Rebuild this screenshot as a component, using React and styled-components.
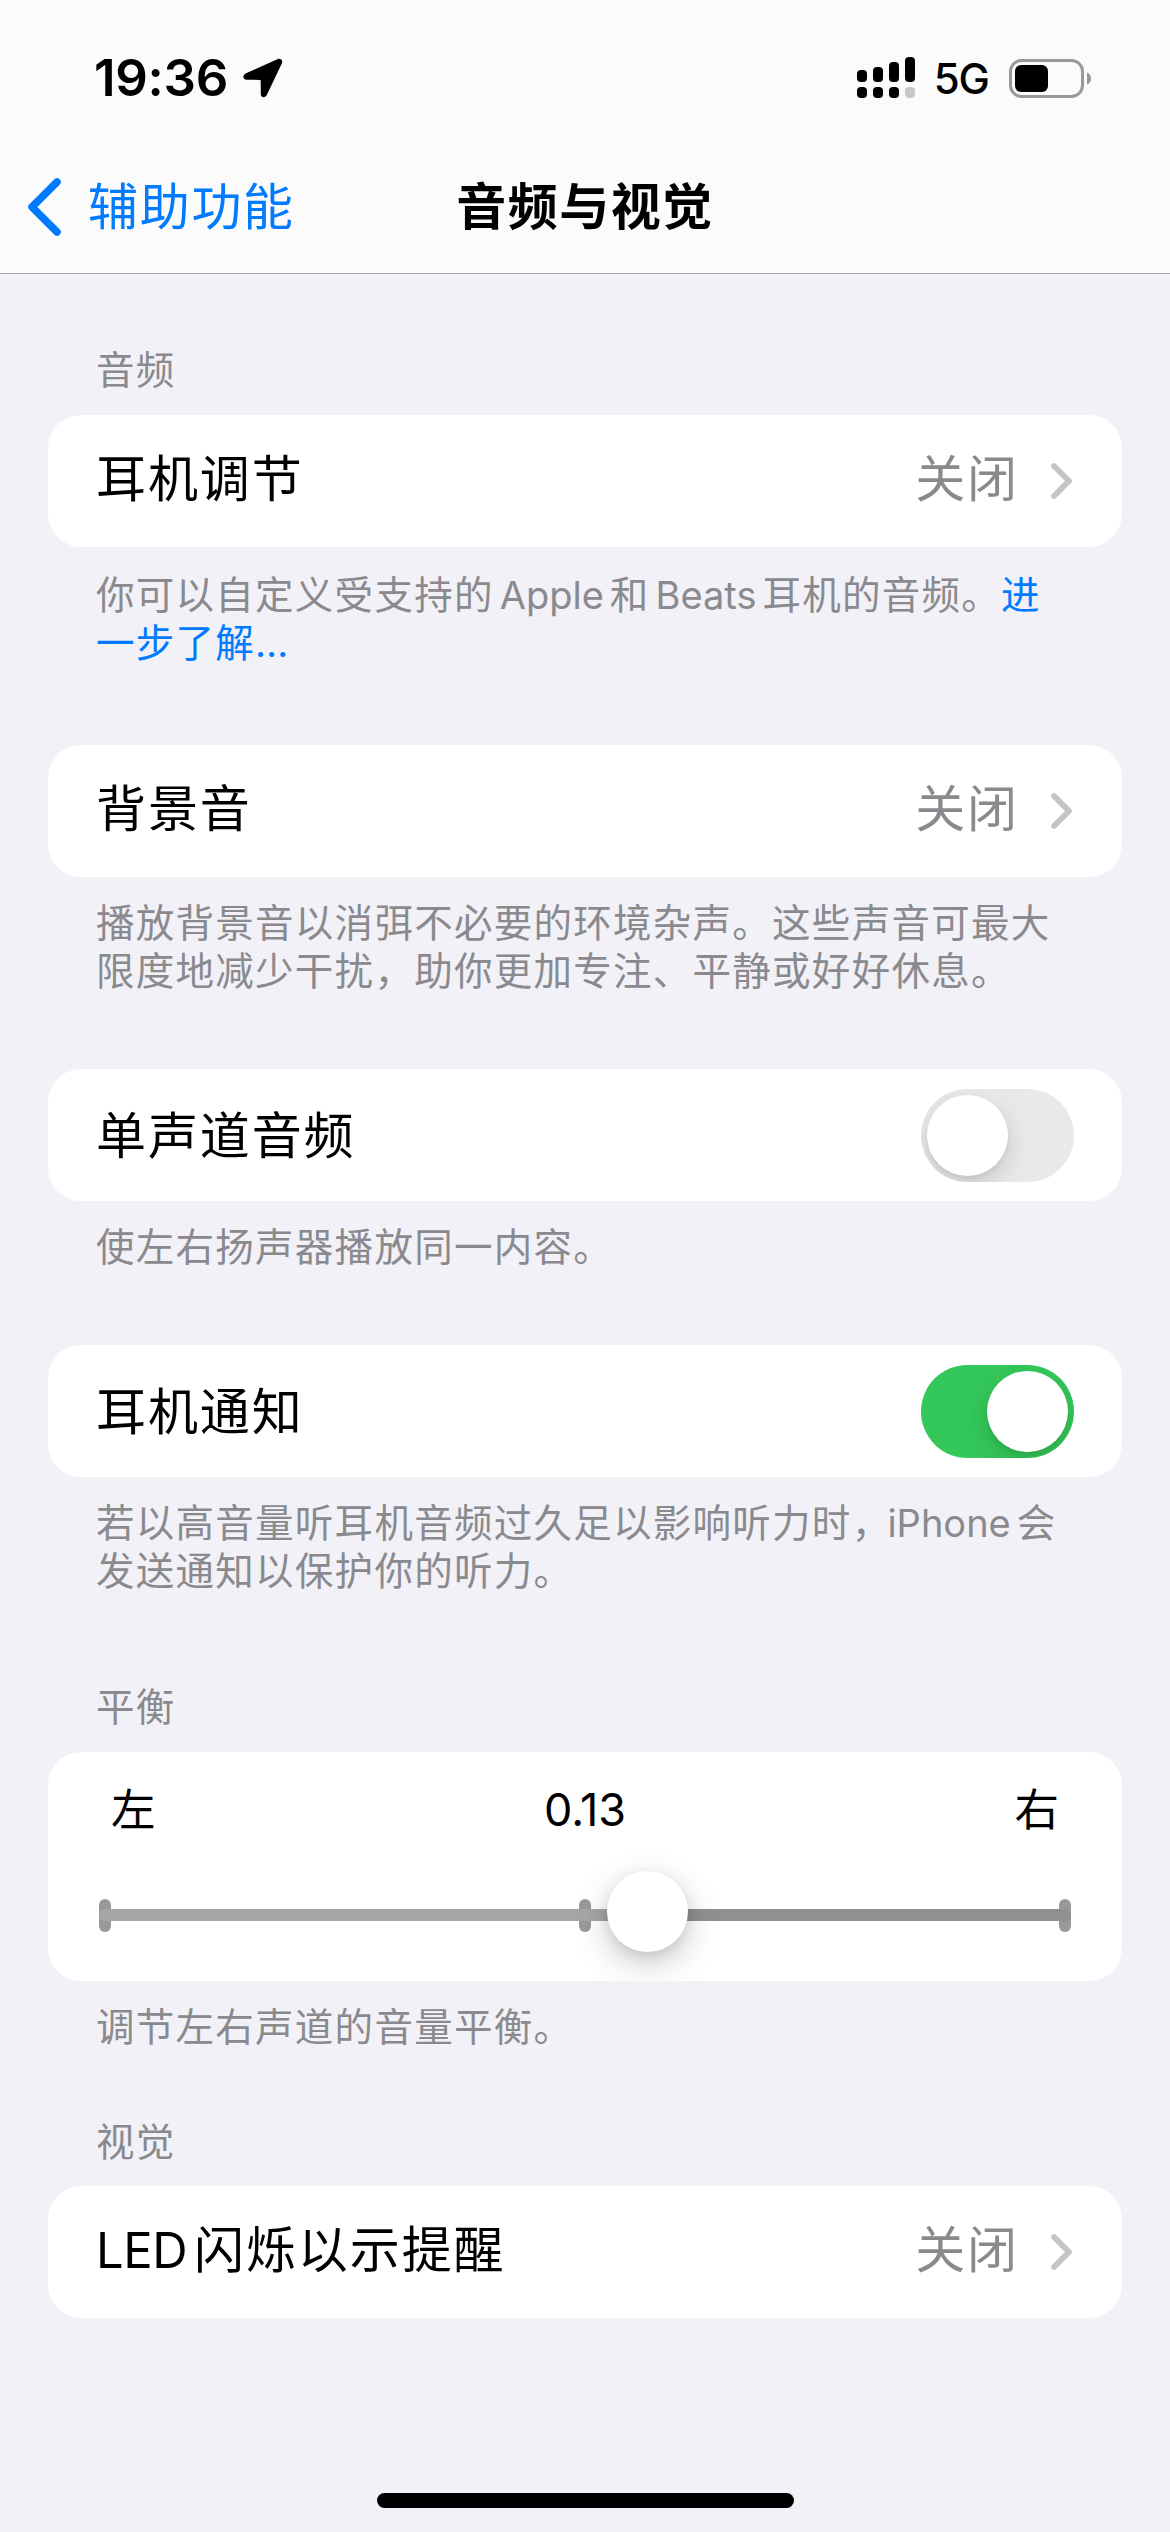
import React, { useState } from 'react'
import styled, { createGlobalStyle } from 'styled-components'

const colors = {
  BLACK: '#000000',
  WHITE: '#ffffff',
  BLUE: '#007aff',
  GREEN: '#34c759',
  GREY: '#8a8a8e',
  PAGE: '#f2f1f7',
  BAR: '#fbfbfc',
  LINE: '#a7a7ab',
}

const GlobalStyle = createGlobalStyle`
  * {
    box-sizing: border-box;
  }
  body {
    margin: 0;
    background: ${colors.PAGE};
    font-family: Inter, 'Noto Sans CJK SC', sans-serif;
  }
`

const Screen = styled.div`
  display: flex;
  flex-direction: column;
  width: 1170px;
  height: 2532px;
  overflow: hidden;
  background: ${colors.PAGE};
`

const Header = styled.header`
  height: 274px;
  background: ${colors.BAR};
  border-bottom: 1px solid ${colors.LINE};
`

const StatusBar = styled.div`
  display: flex;
  align-items: center;
  justify-content: space-between;
  height: 156px;
  padding: 0 79px 0 94px;
`

const StatusGroup = styled.div`
  display: flex;
  align-items: center;
`

const Clock = styled.span`
  margin-right: 15px;
  font-size: 51px;
  font-weight: 600;
  line-height: 60px;
  letter-spacing: -0.3px;
`

const Network = styled.span`
  margin: 2px 20px 0 19px;
  font-size: 42px;
  font-weight: 500;
  line-height: 52px;
  letter-spacing: -1px;
`

const NavBar = styled.nav`
  display: grid;
  grid-template-columns: 1fr auto 1fr;
  align-items: center;
  height: 101px;
  padding: 0 28px;
`

const BackLink = styled.a`
  display: flex;
  align-items: center;
  gap: 26px;
  color: ${colors.BLUE};
  font-size: 50px;
  line-height: 60px;
  letter-spacing: 1.7px;
`

const Title = styled.h1`
  margin: 0;
  font-size: 50px;
  font-weight: 600;
  line-height: 60px;
  letter-spacing: 1.5px;
`

const Section = styled.section`
  margin: ${props => props.$top}px 48px 0;
`

const Heading = styled.h2`
  margin: 0;
  padding: 0 48px ${props => props.$gap || 21}px;
  color: ${colors.GREY};
  font-size: 38.5px;
  font-weight: 400;
  line-height: 48px;
  letter-spacing: 1.2px;
`

const Card = styled.div`
  overflow: hidden;
  border-radius: 33px;
  background: ${colors.WHITE};
`

const Row = styled.div`
  display: flex;
  align-items: center;
  justify-content: space-between;
  height: 132px;
  padding: 0 48px;
`

const Label = styled.span`
  margin-top: ${props => props.$shift || -4}px;
  font-size: 50px;
  line-height: 60px;
  letter-spacing: 1.9px;
`

const Value = styled.span`
  display: flex;
  align-items: center;
  gap: 31px;
  color: ${colors.GREY};
`

const Note = styled.p`
  margin: 0;
  padding: ${props => props.$gap || 22}px 0 0 48px;
  color: ${colors.GREY};
  font-size: 38.5px;
  line-height: 48px;
  letter-spacing: 1.27px;
  white-space: nowrap;
`

const Latin = styled.span`
  margin: ${props => props.$space || '0 6px'};
  font-size: ${props => props.$size || 38}px;
  letter-spacing: ${props => props.$track || 0}px;
`

const Link = styled.a`
  color: ${colors.BLUE};
`

const Track = styled.button`
  display: flex;
  justify-content: ${props => (props.$on ? 'flex-end' : 'flex-start')};
  width: 153px;
  height: 93px;
  margin-top: 1px;
  padding: 6px;
  overflow: hidden;
  border: 0;
  border-radius: 47px;
  background: ${props => (props.$on ? colors.GREEN : '#e9e9e9')};
`

const Knob = styled.span`
  width: 81px;
  height: 81px;
  border-radius: 50%;
  background: ${colors.WHITE};
  box-shadow: 0 9px 24px rgba(0, 0, 0, 0.15), 0 3px 4px rgba(0, 0, 0, 0.05);
`

const BalanceCard = styled(Card)`
  height: 229px;
  padding: 31px 51px 0;
`

const BalanceLabels = styled.div`
  display: grid;
  grid-template-columns: 1fr auto 1fr;
  padding: 0 12px;
  font-size: 44.5px;
  line-height: 54px;

  span:last-child {
    text-align: right;
  }
`

const BalanceValue = styled.span`
  font-size: 45px;
  letter-spacing: -0.1px;
`

const Slider = styled.div`
  position: relative;
  display: flex;
  align-items: center;
  justify-content: space-between;
  height: 33px;
  margin-top: 62px;
`

const Tick = styled.span`
  width: 12px;
  height: 33px;
  border-radius: 6px;
  background: #999999;
`

const Rail = styled.div`
  position: absolute;
  top: 10px;
  left: 0;
  right: 0;
  height: 12px;
  border-radius: 6px;
  overflow: hidden;
  background: #909092;
`

const RailFill = styled.div`
  height: 12px;
  background: #a6a6a6;
`

const Thumb = styled.span`
  position: absolute;
  top: -28px;
  width: 81px;
  height: 81px;
  border-radius: 50%;
  background: ${colors.WHITE};
  box-shadow: 0 12px 36px rgba(0, 0, 0, 0.2), 0 4px 14px rgba(0, 0, 0, 0.1);
`

const HomeIndicator = styled.div`
  width: 417px;
  height: 15px;
  margin: auto auto 24px;
  border-radius: 8px;
  background: ${colors.BLACK};
`

const LocationIcon = () => (
  <svg width="40" height="40" viewBox="0 0 40 40">
    <path
      d="M34.3 1.2 L2.6 15.5 C-0.9 17.3 0 21.7 3.4 21.8 L17 21.9 Q17.7 21.9 17.7 22.6 L17.8 36.2 C17.9 39.7 22.3 40.2 23.8 37 L38.8 5.4 C40.2 2.3 37.5 -0.2 34.3 1.2 Z"
      fill={colors.BLACK}
    />
  </svg>
)

// Two rows of bars, one for each SIM
const SignalIcon = () => (
  <svg width="58" height="42" viewBox="0 0 58 42">
    {[13, 10, 5, 0].map((top, i) => (
      <rect key={top} x={i * 16} y={top} width="10" height={25 - top} rx="4" />
    ))}
    {[0, 16, 32, 48].map(x => (
      <rect key={x} x={x} y="30" width="10" height="11" rx="4" fill={x === 48 ? '#c8c8c9' : colors.BLACK} />
    ))}
  </svg>
)

const BatteryIcon = () => (
  <svg width="82" height="39" viewBox="0 0 82 39">
    <rect x="1.5" y="1.5" width="72" height="36" rx="11" fill="none" stroke="#999999" strokeWidth="3" />
    <rect x="6" y="6" width="33" height="27" rx="6" />
    <path d="M78 13.5 Q82 15 82 19.5 Q82 24 78 25.5 Z" fill="#999999" />
  </svg>
)

const BackIcon = () => (
  <svg width="34" height="58" viewBox="0 0 34 58">
    <path d="M29 4 L4 29 L29 54" fill="none" stroke={colors.BLUE} strokeWidth="7.5" strokeLinecap="round" strokeLinejoin="round" />
  </svg>
)

const ChevronIcon = () => (
  <svg width="24" height="38" viewBox="0 0 24 38">
    <path d="M4 4 L19 19 L4 34" fill="none" stroke="#c4c4c6" strokeWidth="5.8" strokeLinecap="round" strokeLinejoin="round" />
  </svg>
)

const LinkRow = ({ label, value }) => (
  <Card>
    <Row>
      <Label>{ label }</Label>
      <Value>
        <Label>{ value }</Label>
        <ChevronIcon />
      </Value>
    </Row>
  </Card>
)

const SwitchRow = ({ label, initial }) => {
  const [on, setOn] = useState(initial)
  return (
    <Card>
      <Row>
        <Label $shift={2}>{ label }</Label>
        <Track $on={on} role="switch" aria-checked={on} onClick={() => setOn(!on)}>
          <Knob />
        </Track>
      </Row>
    </Card>
  )
}

const BalanceSlider = ({ value }) => {
  // the thumb stays inside the rail at both ends
  const left = ((value + 1) / 2) * (972 - 81) + 5
  return (
    <BalanceCard>
      <BalanceLabels>
        <span>左</span>
        <BalanceValue>{ value.toFixed(2) }</BalanceValue>
        <span>右</span>
      </BalanceLabels>
      <Slider>
        <Tick />
        <Tick />
        <Tick />
        <Rail>
          <RailFill style={{ width: left + 40 }} />
        </Rail>
        <Thumb style={{ left }} />
      </Slider>
    </BalanceCard>
  )
}

const App = () => (
  <Screen>
    <GlobalStyle />
    <Header>
      <StatusBar>
        <StatusGroup>
          <Clock>19:36</Clock>
          <LocationIcon />
        </StatusGroup>
        <StatusGroup>
          <SignalIcon />
          <Network>5G</Network>
          <BatteryIcon />
        </StatusGroup>
      </StatusBar>
      <NavBar>
        <BackLink>
          <BackIcon />
          辅助功能
        </BackLink>
        <Title>音频与视觉</Title>
      </NavBar>
    </Header>

    <Section $top={72}>
      <Heading>音频</Heading>
      <LinkRow label="耳机调节" value="关闭" />
      <Note $gap={24}>
        你可以自定义受支持的<Latin>Apple</Latin>和<Latin>Beats</Latin>耳机的音频。<Link>进<br />一步了解…</Link>
      </Note>
    </Section>

    <Section $top={78}>
      <LinkRow label="背景音" value="关闭" />
      <Note>
        播放背景音以消弭不必要的环境杂声。这些声音可最大<br />
        限度地减少干扰，助你更加专注、平静或好好休息。
      </Note>
    </Section>

    <Section $top={74}>
      <SwitchRow label="单声道音频" initial={false} />
      <Note>使左右扬声器播放同一内容。</Note>
    </Section>

    <Section $top={74}>
      <SwitchRow label="耳机通知" initial={true} />
      <Note>
        若以高音量听耳机音频过久足以影响听力时，<Latin $space="0 6px 0 -4px">iPhone</Latin>会<br />
        发送通知以保护你的听力。
      </Note>
    </Section>

    <Section $top={88}>
      <Heading>平衡</Heading>
      <BalanceSlider value={0.13} />
      <Note>调节左右声道的音量平衡。</Note>
    </Section>

    <Section $top={67}>
      <Heading $gap={20}>视觉</Heading>
      <LinkRow label={<><Latin $size={49} $space="0 7px 0 0" $track={-0.5}>LED</Latin>闪烁以示提醒</>} value="关闭" />
    </Section>

    <HomeIndicator />
  </Screen>
)

export default App
